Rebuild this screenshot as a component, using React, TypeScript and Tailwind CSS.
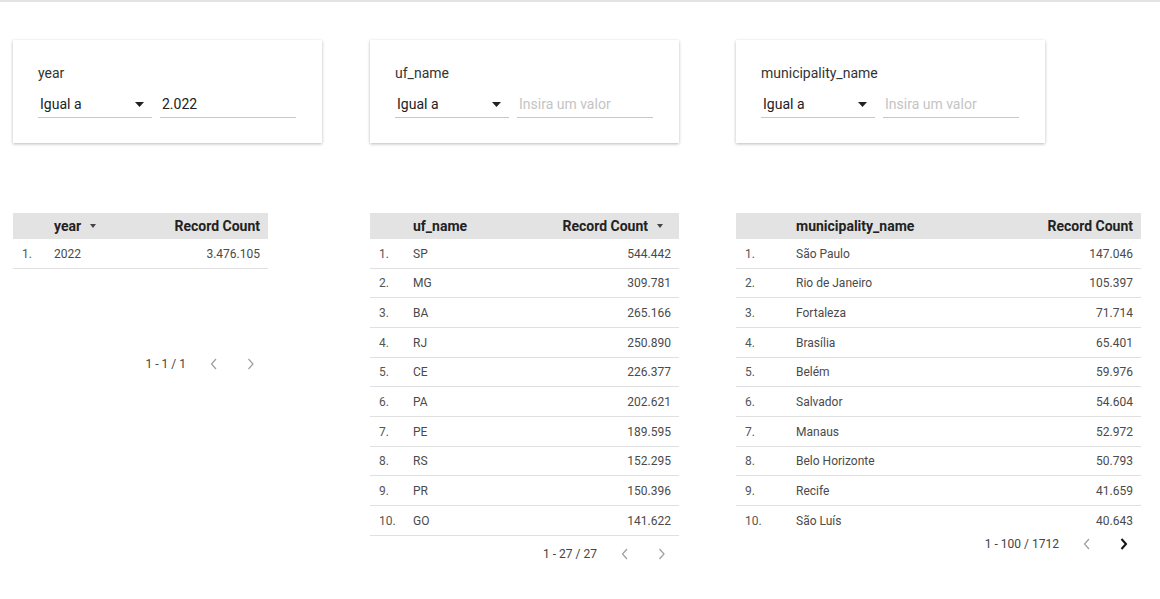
import React from "react";

const font = { fontFamily: "Roboto, 'Noto Sans', sans-serif" };

function Caret() {
  return (
    <svg width="9" height="5" viewBox="0 0 9 5" className="shrink-0">
      <path d="M0 0 L9 0 L4.5 5 Z" fill="#202124" />
    </svg>
  );
}

function SmallCaret() {
  return (
    <svg width="6" height="4" viewBox="0 0 6 4" className="shrink-0">
      <path d="M0 0 L6 0 L3 4 Z" fill="#444" />
    </svg>
  );
}

function Chevron({ dir, active }: { dir: "l" | "r"; active?: boolean }) {
  const d = dir === "l" ? "M6 1 L1.5 6 L6 11" : "M1.5 1 L6 6 L1.5 11";
  return (
    <svg width="8" height="12" viewBox="0 0 8 12">
      <path
        d={d}
        fill="none"
        stroke={active ? "#111" : "#9e9e9e"}
        strokeWidth={active ? 2 : 1.2}
      />
    </svg>
  );
}

function FilterCard({ label, value }: { label: string; value?: string }) {
  return (
    <div className="w-[309px] h-[103px] bg-white shadow-[0_1px_3px_rgba(0,0,0,0.28)] pl-[25px] pr-[25px] pt-[25px]">
      <div className="text-[14px] leading-[16px] text-[#333]">{label}</div>
      <div className="flex mt-[10px] gap-[8px]">
        <div className="w-[114px] h-[27px] border-b border-[#c8c8c8] flex items-center pl-[2px] pr-[8px]">
          <span className="flex-1 text-[14px] text-[#202124]">Igual a</span>
          <Caret />
        </div>
        <div className="w-[136px] h-[27px] border-b border-[#c8c8c8] flex items-center pl-[2px]">
          {value ? (
            <span className="text-[14px] text-[#202124]">{value}</span>
          ) : (
            <span className="text-[14px] text-[#c4c4c4]">Insira um valor</span>
          )}
        </div>
      </div>
    </div>
  );
}

type Row = [string, string];

function Table({
  width,
  numW,
  nameHeader,
  nameSort,
  countSort,
  rows,
  pager,
  nextActive,
  lastBorder,
  pagerClass,
}: {
  width: number;
  numW: string;
  nameHeader: string;
  nameSort?: boolean;
  countSort?: boolean;
  rows: Row[];
  pager: string;
  nextActive?: boolean;
  lastBorder: boolean;
  pagerClass: string;
}) {
  return (
    <div style={{ width }}>
      <div className="h-[26px] bg-[#e3e3e3] flex items-center pr-[8px] text-[14px] font-bold text-[#222]">
        <div className={numW}></div>
        <div className="flex-1 flex items-center gap-[9px]">
          <span>{nameHeader}</span>
          {nameSort && <SmallCaret />}
        </div>
        <div className="flex items-center gap-[9px]">
          <span>Record Count</span>
          {countSort && (
            <span className="mr-[8px] flex items-center">
              <SmallCaret />
            </span>
          )}
        </div>
      </div>
      {rows.map((r, i) => (
        <div
          key={i}
          className={
            "h-[29.67px] flex items-center pr-[8px] pt-[1px] text-[12px] text-[#4a4a4a] " +
            (lastBorder || i < rows.length - 1 ? "border-b border-[#e0e0e0]" : "")
          }
        >
          <div className={numW + " pl-[9px] text-[#555]"}>{i + 1}.</div>
          <div className="flex-1">{r[0]}</div>
          <div>{r[1]}</div>
        </div>
      ))}
      <div className={"flex items-center justify-end pr-[13px] text-[12px] text-[#444] " + pagerClass}>
        <span>{pager}</span>
        <span className="ml-[24px] flex items-center">
          <Chevron dir="l" />
        </span>
        <span className="ml-[29px] flex items-center">
          <Chevron dir="r" active={nextActive} />
        </span>
      </div>
    </div>
  );
}

export default function App() {
  const ufRows: Row[] = [
    ["SP", "544.442"],
    ["MG", "309.781"],
    ["BA", "265.166"],
    ["RJ", "250.890"],
    ["CE", "226.377"],
    ["PA", "202.621"],
    ["PE", "189.595"],
    ["RS", "152.295"],
    ["PR", "150.396"],
    ["GO", "141.622"],
  ];
  const muniRows: Row[] = [
    ["São Paulo", "147.046"],
    ["Rio de Janeiro", "105.397"],
    ["Fortaleza", "71.714"],
    ["Brasília", "65.401"],
    ["Belém", "59.976"],
    ["Salvador", "54.604"],
    ["Manaus", "52.972"],
    ["Belo Horizonte", "50.793"],
    ["Recife", "41.659"],
    ["São Luís", "40.643"],
  ];
  return (
    <div style={font} className="w-[1160px] h-[599px] bg-white border-t-2 border-[#e3e3e3] overflow-hidden">
      <div className="flex pl-[13px] pt-[38px]">
        <FilterCard label="year" value="2.022" />
        <div className="ml-[48px]">
          <FilterCard label="uf_name" />
        </div>
        <div className="ml-[57px]">
          <FilterCard label="municipality_name" />
        </div>
      </div>
      <div className="flex pl-[13px] mt-[70px] items-start">
        <div className="w-[309px]">
          <Table
            width={255}
            numW="w-[41px]"
            nameHeader="year"
            nameSort
            rows={[["2022", "3.476.105"]]}
            pager="1 - 1 / 1"
            lastBorder
            pagerClass="mt-[85px] h-[20px]"
          />
        </div>
        <div className="ml-[48px]">
          <Table
            width={309}
            numW="w-[43px]"
            nameHeader="uf_name"
            countSort
            rows={ufRows}
            pager="1 - 27 / 27"
            lastBorder
            pagerClass="mt-[8px] h-[20px]"
          />
        </div>
        <div className="ml-[57px]">
          <Table
            width={405}
            numW="w-[60px]"
            nameHeader="municipality_name"
            rows={muniRows}
            pager="1 - 100 / 1712"
            nextActive
            lastBorder={false}
            pagerClass="h-[16px]"
          />
        </div>
      </div>
    </div>
  );
}
